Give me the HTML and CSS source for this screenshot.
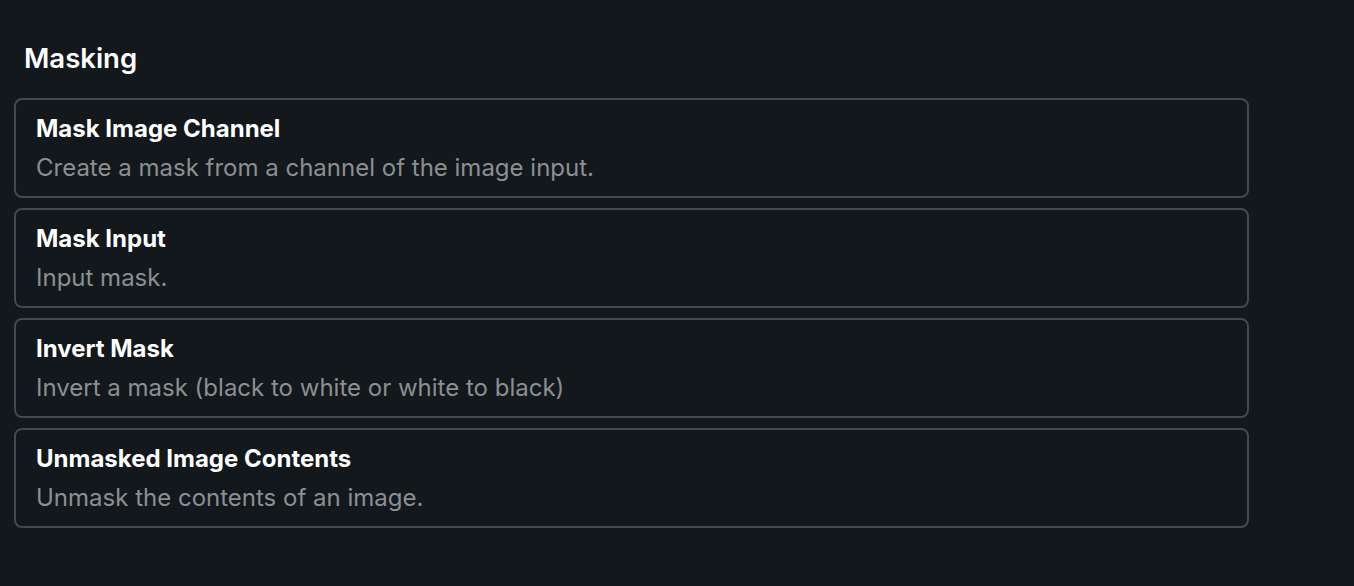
FILE: index.html
```html
<!DOCTYPE html>
<html>
<head>
<meta charset="utf-8">
<link rel="stylesheet" href="styles.css">
</head>
<body>
<section class="panel">
  <h2 class="heading">Masking</h2>
  <div class="list">
    <div class="card">
      <div class="card-title">Mask Image Channel</div>
      <div class="card-desc">Create a mask from a channel of the image input.</div>
    </div>
    <div class="card">
      <div class="card-title">Mask Input</div>
      <div class="card-desc">Input mask.</div>
    </div>
    <div class="card">
      <div class="card-title">Invert Mask</div>
      <div class="card-desc">Invert a mask (black to white or white to black)</div>
    </div>
    <div class="card">
      <div class="card-title">Unmasked Image Contents</div>
      <div class="card-desc">Unmask the contents of an image.</div>
    </div>
  </div>
</section>
</body>
</html>
```
FILE: styles.css
```css
html, body {
  margin: 0;
  padding: 0;
  background: #12181c;
  font-family: Inter, "Noto Sans", sans-serif;
}
.panel {
  padding: 34px 14px 0 14px;
  width: 1235px;
}
.heading {
  margin: 0 0 16px 10px;
  font-size: 27.5px;
  font-weight: 600;
  line-height: 48px;
  color: #ffffff;
}
.list {
  display: flex;
  flex-direction: column;
  gap: 10px;
}
.card {
  border: 2px solid #45494c;
  border-radius: 8px;
  padding: 10px 20px 8px 20px;
  height: 100px;
  box-sizing: border-box;
}
.card-title {
  font-size: 24px;
  font-weight: 700;
  line-height: 38px;
  color: #ffffff;
}
.card-desc {
  font-size: 24px;
  font-weight: 400;
  line-height: 40px;
  color: #8c8f92;
}
```
